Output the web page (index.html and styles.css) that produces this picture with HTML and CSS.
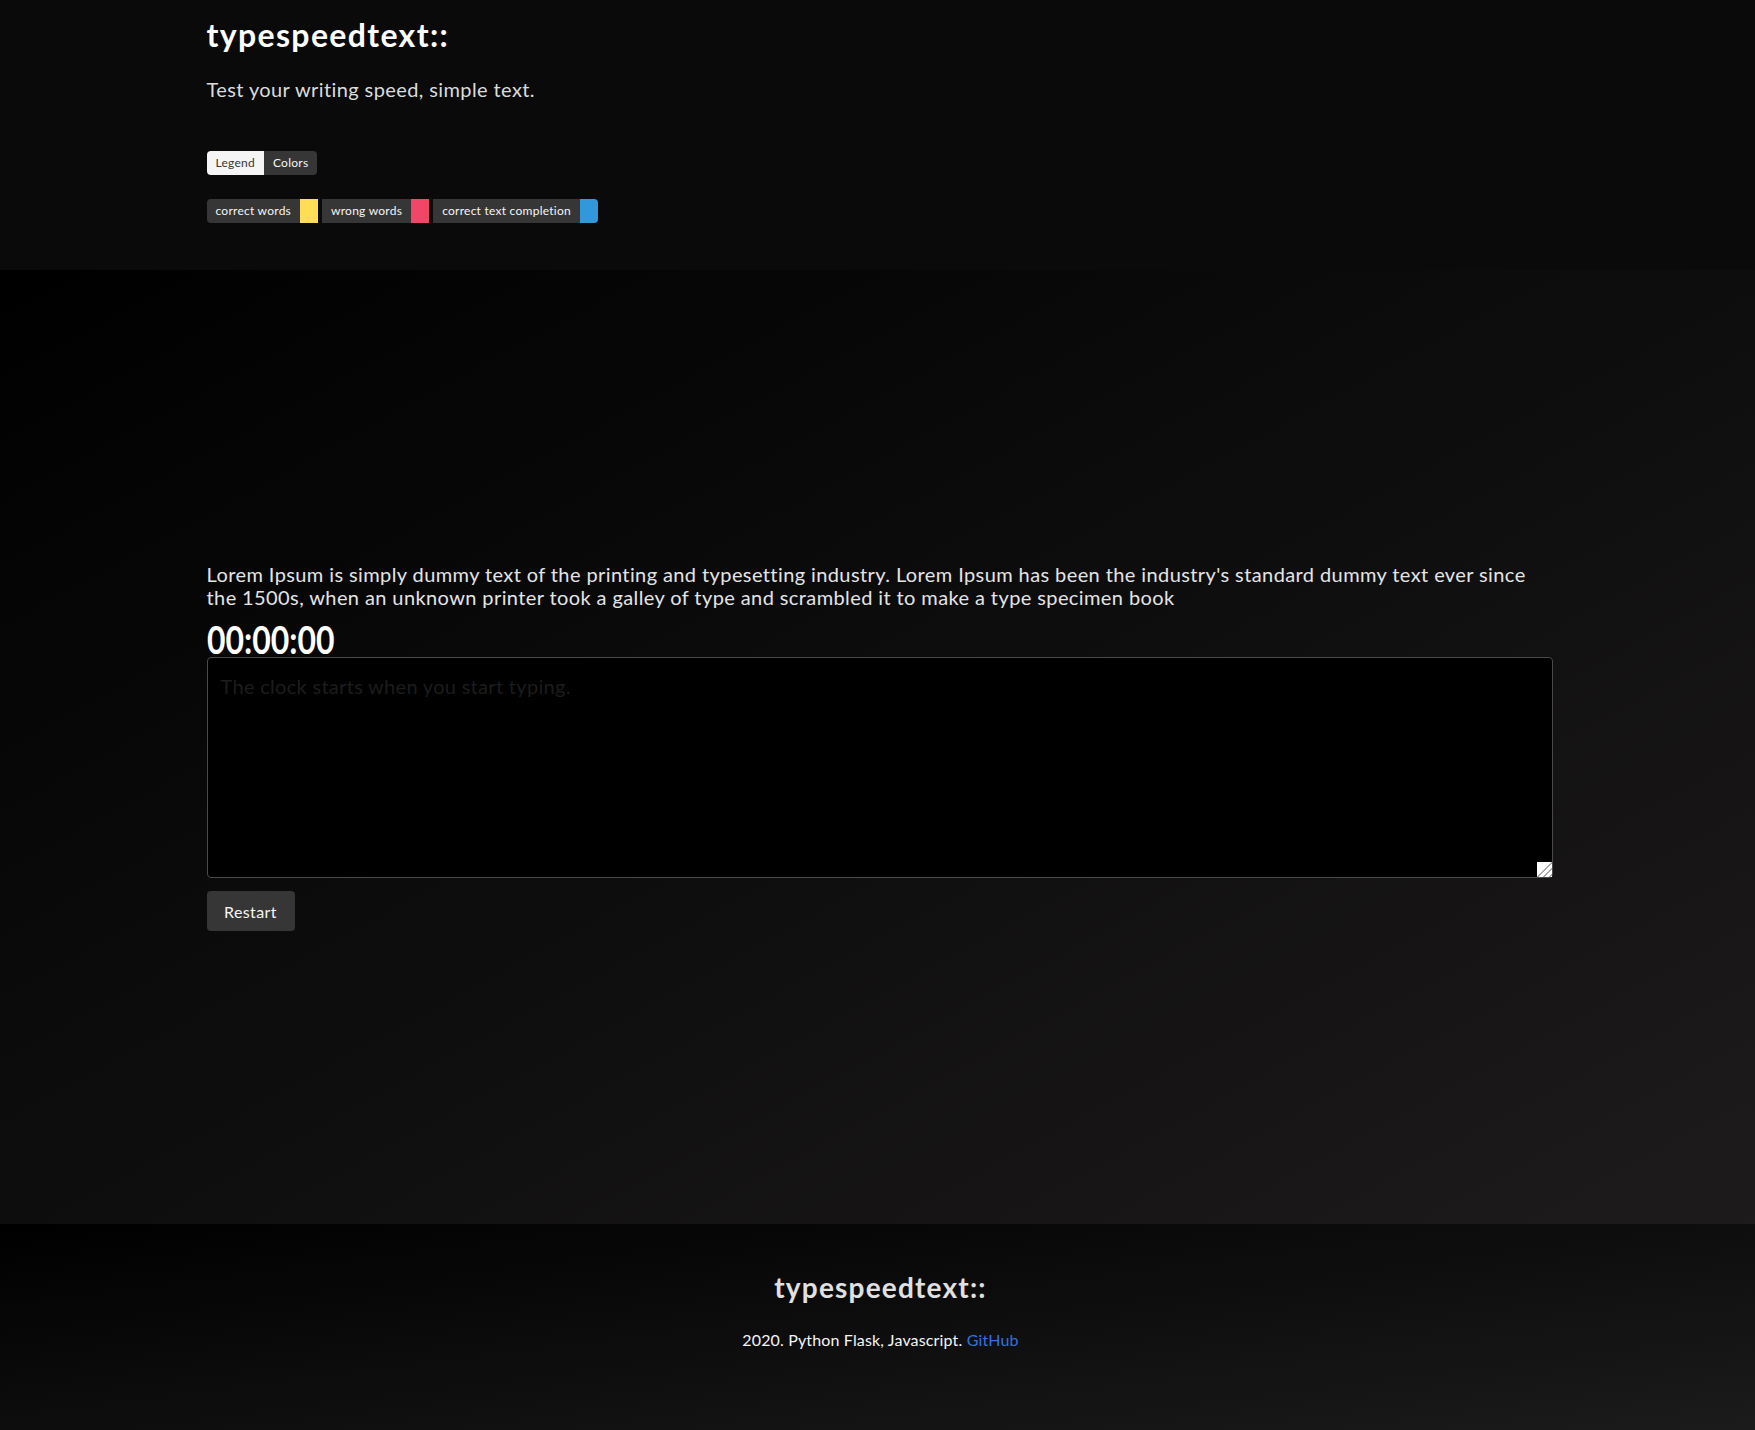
FILE: index.html
```html
<!DOCTYPE html>
<html lang="en">
<head>
<meta charset="utf-8">
<title>typespeedtext::</title>
<link rel="stylesheet" href="styles.css">
</head>
<body>
<header class="top">
  <div class="container">
    <h1 class="brand">typespeedtext::</h1>
    <p class="tagline">Test your writing speed, simple text.</p>
    <div class="tag-row legend-row">
      <span class="tag tag-light tag-first">Legend</span><span class="tag tag-dark tag-last">Colors</span>
    </div>
    <div class="tag-row colors-row">
      <span class="pair"><span class="tag tag-dark tag-first">correct words</span><span class="tag swatch swatch-yellow"></span></span>
      <span class="pair"><span class="tag tag-dark">wrong words</span><span class="tag swatch swatch-red"></span></span>
      <span class="pair"><span class="tag tag-dark">correct text completion</span><span class="tag swatch swatch-blue tag-last"></span></span>
    </div>
  </div>
</header>
<main class="stage">
  <div class="container">
    <p class="sample">Lorem Ipsum is simply dummy text of the printing and typesetting industry. Lorem Ipsum has been the industry's standard dummy text ever since the 1500s, when an unknown printer took a galley of type and scrambled it to make a type specimen book</p>
    <h2 class="timer"><span class="timer-digits">00:00:00</span></h2>
    <textarea class="typing" placeholder="The clock starts when you start typing."></textarea>
    <button class="restart" type="button">Restart</button>
  </div>
</main>
<footer class="foot">
  <h3 class="foot-title">typespeedtext::</h3>
  <p class="foot-text">2020. Python Flask, Javascript. <a href="#" class="foot-link">GitHub</a></p>
</footer>
</body>
</html>
```
FILE: styles.css
```css
* { box-sizing: border-box; }

html, body {
  margin: 0;
  padding: 0;
}

body {
  font-family: "Lato", "Noto Sans", sans-serif;
  color: #f5f5f5;
  background: #000;
}

.container {
  width: 1346px;
  margin-left: calc(50% - 671px);
}

/* ---------- header ---------- */
.top {
  background: #0a0a0a;
  padding: 17px 0 47px;
}

.brand {
  margin: 0;
  font-size: 32px;
  line-height: 36px;
  font-weight: 700;
  letter-spacing: 1.35px;
  color: #ffffff;
}

.tagline {
  margin: 24px 0 0;
  font-size: 20px;
  line-height: 25px;
  letter-spacing: 0.4px;
  color: #dcdcdc;
}

.tag-row {
  display: flex;
  align-items: center;
}

.legend-row {
  margin-top: 49px;
}

.colors-row {
  margin-top: 24px;
  gap: 4px;
}

.pair {
  display: flex;
}

.tag {
  display: inline-flex;
  align-items: center;
  height: 24px;
  padding: 0 9px;
  font-size: 12px;
  line-height: 1.5;
  letter-spacing: 0.25px;
}

.tag-light {
  background: #f5f5f5;
  color: #363636;
}

.tag-dark {
  background: #363636;
  color: #f5f5f5;
}

.tag-first {
  border-radius: 4px 0 0 4px;
}

.tag-last {
  border-radius: 0 4px 4px 0;
}

.swatch {
  width: 18px;
  padding: 0;
}

.swatch-yellow { background: #ffdd57; }
.swatch-red { background: #f14668; }
.swatch-blue { background: #3298dc; }

/* ---------- main stage ---------- */
.stage {
  min-height: 954px;
  display: flex;
  flex-direction: column;
  justify-content: center;
  background: linear-gradient(to bottom right, #000000, #1d1b1b);
}

.sample {
  margin: 0 0 13px;
  font-size: 20px;
  line-height: 22.5px;
  letter-spacing: 0.4px;
  color: #e4e4e4;
}

.timer {
  margin: 0;
  font-size: 38px;
  line-height: 36px;
  font-weight: 700;
  color: #ffffff;
}

.timer-digits {
  display: inline-block;
  transform: scaleX(0.84);
  transform-origin: left center;
}

.typing {
  display: block;
  width: 100%;
  height: 221px;
  margin: 0;
  padding: 13px 13px;
  background: #000000;
  border: 1px solid #4a4a4a;
  border-radius: 4px;
  color: #f5f5f5;
  font-family: "Lato", "Noto Sans", sans-serif;
  font-size: 20px;
  line-height: 1.5;
  letter-spacing: 0.3px;
  resize: vertical;
  outline: none;
}

.typing::placeholder {
  color: #1c1c1c;
}

.typing::-webkit-scrollbar {
  width: 15px;
  height: 15px;
}

.typing::-webkit-resizer {
  background-color: #ffffff;
  background-image:
    linear-gradient(135deg, #ffffff 50%, transparent 50%),
    repeating-linear-gradient(135deg, #ffffff 0 2.5px, #a8a8a8 2.5px 4px);
}

.restart {
  display: block;
  margin-top: 13px;
  height: 40px;
  padding: 0 16px;
  width: 88px;
  background: #363636;
  color: #f5f5f5;
  border: 1px solid transparent;
  border-radius: 4px;
  font-family: "Lato", "Noto Sans", sans-serif;
  font-size: 16px;
  letter-spacing: 0.4px;
}

/* ---------- footer ---------- */
.foot {
  padding: 48px 24px 96px 30px;
  text-align: center;
  background: linear-gradient(to bottom right, #000000, #1c1c1c);
}

.foot-title {
  margin: 0 0 24px;
  font-size: 28px;
  line-height: 31.5px;
  font-weight: 700;
  letter-spacing: 1.2px;
  color: #e0e0e0;
}

.foot-text {
  margin: 0;
  font-size: 16px;
  line-height: 24px;
  letter-spacing: 0.15px;
  color: #f5f5f5;
}

.foot-link {
  color: #3273dc;
  text-decoration: none;
}
```
